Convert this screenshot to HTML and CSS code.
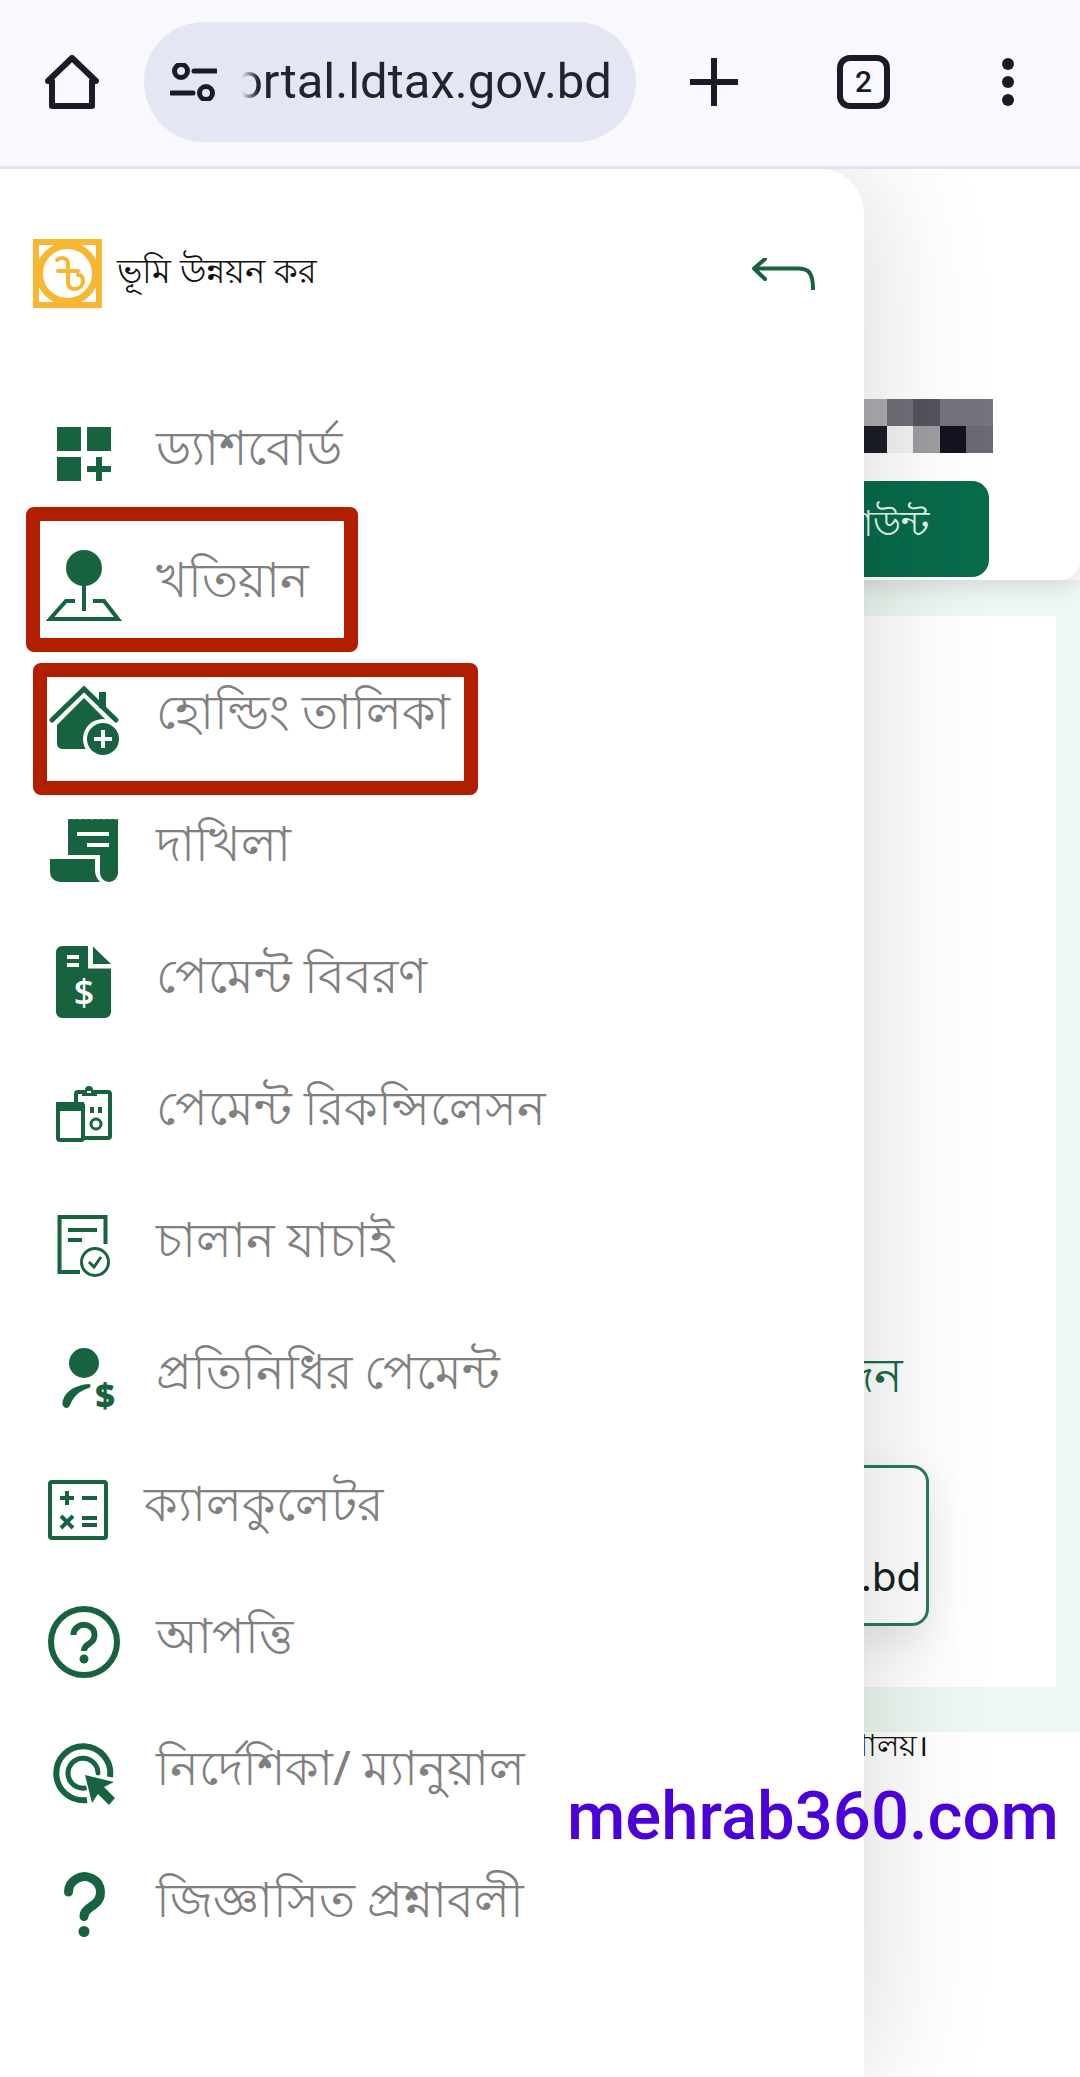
FILE: index.html
```html
<!DOCTYPE html>
<html lang="bn">
<head>
<meta charset="utf-8">
<title>ভূমি উন্নয়ন কর</title>
<link rel="stylesheet" href="styles.css">
</head>
<body>
<header class="toolbar">
  <svg class="tb-home" width="54" height="54" viewBox="0 0 54 54"><path class="tb-stroke" d="M7 51V26H3L27 3l24 23h-4v25Z"/></svg>
  <div class="pill">
    <svg class="pill-icon" width="47" height="38" viewBox="0 0 47 38"><circle class="tb-thin" cx="11" cy="8" r="6.5"/><path class="tb-thin" d="M24 8H46M1 30H23"/><circle class="tb-thin" cx="36" cy="30" r="6.5"/></svg>
    <div class="url"><span>portal.ldtax.gov.bd</span></div>
  </div>
  <svg class="tb-plus" width="48" height="48" viewBox="0 0 48 48"><path class="tb-stroke" d="M24 1V47M1 24H47"/></svg>
  <div class="tabs">2</div>
  <svg class="tb-dots" width="14" height="48" viewBox="0 0 14 48"><circle cx="7" cy="6" r="6"/><circle cx="7" cy="24" r="6"/><circle cx="7" cy="42" r="6"/></svg>
</header>

<main class="page">
  <section class="card">
    <div class="pixels">
      <i class="p1"></i><i class="p2"></i><i class="p3"></i><i class="p4"></i><i class="p4"></i>
      <i class="p5"></i><i class="p6"></i><i class="p7"></i><i class="p8"></i><i class="p9"></i>
    </div>
    <div class="account">অ্যাকাউন্ট</div>
  </section>
  <section class="band">
    <div class="panel">
      <h2 class="panel-title">আবেদন</h2>
      <div class="site-box">www.ldtax.gov.bd</div>
    </div>
  </section>
  <footer class="foot">ভূমি মন্ত্রণালয়।</footer>

  <aside class="drawer">
    <div class="brand">
      <svg class="logo" width="69" height="69" viewBox="0 0 69 69">
        <rect class="logo-frame" x="3" y="3" width="63" height="63"/>
        <circle class="logo-ring" cx="34.5" cy="34.5" r="28"/>
        <path class="logo-mark" d="M24 21c3-3 10-3 11 3V43c0 5 3 7 7 7s8-3 8-8-3-6-5-6M25 32H45"/>
      </svg>
      <span class="brand-name">ভূমি উন্নয়ন কর</span>
      <svg class="back" width="64" height="32" viewBox="0 0 64 32"><path d="M13 1L2 10.5 13 21M2 10.5H46C56 10.5 61 14 61 31"/></svg>
    </div>
    <nav class="menu">
      <a class="item"><svg class="ico" viewBox="0 0 80 80"><path d="M13 13H37V37H13ZM43 13H67V37H43ZM13 43H37V67H13ZM52 43H58V52H67V58H58V67H52V58H43V52H52Z"/></svg><span>ড্যাশবোর্ড</span></a>

      <a class="item"><svg class="ico" viewBox="0 0 80 80"><circle cx="40" cy="22" r="18"/><path class="st" d="M40 36V65M31 55H22L6 73H74L60 55H49"/></svg><span>খতিয়ান</span></a>

      <a class="item"><svg class="ico" viewBox="0 0 80 80"><path d="M55 14H62V30H55ZM40 20L67 47V71H18a5 5 0 0 1-5-5V47Z"/><path class="st5" d="M8 42L40 11 72 42"/><circle class="wh" cx="59" cy="61" r="20"/><circle cx="59" cy="61" r="16"/><path class="wh" d="M57 52H61V59H68V63H61V70H57V63H50V59H57Z"/></svg><span>হোল্ডিং তালিকা</span></a>

      <a class="item"><svg class="ico" viewBox="0 0 80 80"><path d="M24 9H74V63a9 9 0 0 1-18 0V45H24Z"/><path d="M6 49H51V60c0 5 2 9 5 12H16A10 10 0 0 1 6 62Z"/><path class="scallop" d="M24 8H74"/><path class="wh" d="M33 22H65V26H33ZM43 33H65V37H43Z"/></svg><span>দাখিলা</span></a>

      <a class="item"><svg class="ico" viewBox="0 0 80 80"><path d="M18 4H44V26.500H67V70a6 6 0 0 1-6 6H18a6 6 0 0 1-6-6V10A6 6 0 0 1 18 4Z"/><path d="M49 4.500L67 22H49Z"/><path class="wh" d="M23 13H35V17H23ZM23 21H35V25H23Z"/><text class="dollar-w" x="40" y="63">$</text></svg><span>পেমেন্ট বিবরণ</span></a>

      <a class="item"><svg class="ico" viewBox="0 0 80 80"><rect class="st" x="32" y="18" width="34" height="46" rx="2"/><path d="M38 22V16H41a4 4 0 0 1 8 0H53V22Z"/><path class="wh" d="M43 17H47V19H43Z"/><rect class="st-wh" x="14" y="30" width="25" height="36" rx="2"/><path d="M12 28H40V37H12Z"/><path d="M46 33H50V39H46ZM54 33H58V39H54Z"/><circle class="st3" cx="52" cy="50" r="5"/></svg><span>পেমেন্ট রিকন্সিলেসন</span></a>

      <a class="item"><svg class="ico" viewBox="0 0 80 80"><path class="st" d="M36 66H15.500V11H61.500V38"/><path class="st" d="M24 24H53M24 34H38"/><circle class="st-wh3" cx="51" cy="56" r="13.500"/><path class="st3" d="M45 56L50 61 57 51"/></svg><span>চালান যাচাই</span></a>

      <a class="item"><svg class="ico" viewBox="0 0 80 80"><circle cx="40" cy="25" r="15"/><path d="M20 69C18 67 18 65 19 62 22 53 31 47 45 46 47 46 47 49 45 50 35 53 30 58 26 67 25 70 22 71 20 69Z"/><text class="dollar-g" x="61" y="70">$</text></svg><span>প্রতিনিধির পেমেন্ট</span></a>

      <a class="item item-tight"><svg class="ico" viewBox="0 0 80 80"><rect class="st" x="6" y="12" width="56" height="56" rx="2"/><path class="st" d="M16 28H30M23 21V35M38 28H53M17 46L29 58M29 46L17 58M38 48H53M38 55H53"/></svg><span>ক্যালকুলেটর</span></a>

      <a class="item"><svg class="ico" viewBox="0 0 80 80"><circle class="st6" cx="40" cy="40" r="33"/><path class="st6" d="M29.500 33a10.500 10 0 1 1 16.500 8c-3.500 2.500-6 3.500-6 8"/><circle cx="40" cy="57" r="4.500"/></svg><span>আপত্তি</span></a>

      <a class="item"><svg class="ico" viewBox="0 0 80 80"><path class="st6" d="M66 43A27 27 0 1 0 43 66"/><path class="st5" d="M54 39A15 15 0 1 0 41 54"/><path class="arrow" d="M41 41L70 48 60 53 71 64 65 71 54 60 48 69Z"/></svg><span>নির্দেশিকা/ ম্যানুয়াল</span></a>

      <a class="item"><svg class="ico" viewBox="0 0 80 80"><path class="st9" d="M24.500 26a16 15.500 0 1 1 25 13c-5 3.500-9.500 6-9.500 11.500"/><circle cx="40" cy="65.500" r="5.500"/></svg><span>জিজ্ঞাসিত প্রশ্নাবলী</span></a>
    </nav>
  </aside>
</main>

<div class="mark mark-a"></div>
<div class="mark mark-b"></div>
<div class="watermark">mehrab360.com</div>
</body>
</html>
```

FILE: styles.css
```css
* { box-sizing: border-box; }
html, body { margin: 0; padding: 0; }
body {
  position: relative;
  width: 1080px;
  height: 2077px;
  overflow: hidden;
  background: #fff;
  font-family: "Noto Sans", "Open Sans", sans-serif;
}

/* browser toolbar */
.toolbar {
  position: relative;
  z-index: 3;
  display: flex;
  align-items: center;
  height: 169px;
  padding-bottom: 3px;
  background: #f8f8fe;
  border-bottom: 3px solid #e2e3ec;
}
.tb-home { margin-left: 45px; flex: none; }
.tb-stroke { fill: none; stroke: #1a1b26; stroke-width: 6; stroke-linejoin: round; stroke-linecap: round; }
.tb-thin { fill: none; stroke: #1a1b26; stroke-width: 5; stroke-linecap: round; }
.pill {
  display: flex;
  align-items: center;
  flex: none;
  width: 492px;
  height: 120px;
  margin-left: 45px;
  padding-left: 26px;
  border-radius: 60px;
  background: #e4e6f3;
}
.pill-icon { flex: none; }
.url {
  display: flex;
  justify-content: flex-end;
  width: 370px;
  margin-left: 25px;
  overflow: hidden;
  white-space: nowrap;
  font-family: Roboto, sans-serif;
  font-size: 49px;
  color: #1f2430;
  -webkit-mask-image: linear-gradient(to right, transparent 0, #000 16px);
  mask-image: linear-gradient(to right, transparent 0, #000 16px);
}
.tb-plus { margin-left: 54px; flex: none; }
.tabs {
  display: flex;
  align-items: center;
  justify-content: center;
  flex: none;
  width: 53px;
  height: 54px;
  margin-left: 99px;
  border: 6px solid #1a1b26;
  border-radius: 13px;
  font-family: Roboto, sans-serif;
  font-size: 30px;
  font-weight: 500;
  color: #1a1b26;
}
.tb-dots { margin-left: 111px; flex: none; fill: #1a1b26; }

/* page behind the drawer */
.page { position: relative; height: 1908px; background: #fff; }
.card {
  position: relative;
  z-index: 1;
  display: flex;
  flex-direction: column;
  align-items: flex-end;
  height: 411px;
  padding: 230px 87px 0 0;
  background: #fff;
  border-bottom-right-radius: 20px;
  box-shadow: 0 6px 24px rgba(0, 0, 0, .12);
}
.pixels {
  display: grid;
  grid-template-columns: repeat(5, 26.600px);
  grid-auto-rows: 27px;
  flex: none;
}
.p1 { background: #adadb2; }
.p2 { background: #6f6f78; }
.p3 { background: #52535c; }
.p4 { background: #73737c; }
.p5 { background: #1b1d28; }
.p6 { background: #f3f3f1; }
.p7 { background: #9d9da2; }
.p8 { background: #13141f; }
.p9 { background: #696a72; }
.account {
  display: flex;
  align-items: center;
  justify-content: flex-end;
  width: 300px;
  height: 96px;
  margin: 28px 4px 0 0;
  padding: 0 60px 6px 0;
  border-radius: 17px;
  background: #086b4c;
  color: #e6f7ef;
  font-size: 36px;
  font-weight: 500;
}
.band {
  height: 1152px;
  padding: 36px 24px 45px 0;
  background: #eef7f1;
}
.panel {
  display: flex;
  flex-direction: column;
  align-items: flex-end;
  height: 100%;
  padding-right: 127px;
  background: #fff;
}
.panel-title {
  margin: 726px 26px 0 0;
  font-size: 48px;
  font-weight: 400;
  line-height: 64px;
  color: #1a6b45;
  white-space: nowrap;
}
.site-box {
  display: flex;
  align-items: flex-end;
  justify-content: flex-end;
  width: 500px;
  height: 161px;
  margin-top: 59px;
  padding: 0 5px 22px 0;
  border: 3px solid #2a7a55;
  border-radius: 17px;
  box-shadow: 0 14px 40px rgba(0, 0, 0, .1);
  font-family: Inter, sans-serif;
  font-size: 40px;
  color: #14241e;
}
.foot {
  padding-right: 152px;
  text-align: right;
  font-size: 30px;
  line-height: 26px;
  color: #111;
}

/* drawer */
.drawer {
  position: absolute;
  top: 0;
  left: 0;
  z-index: 2;
  width: 864px;
  height: 100%;
  background: #fff;
  border-top-right-radius: 44px;
  box-shadow: 0 0 130px rgba(0, 0, 0, .16);
}
.brand {
  display: flex;
  align-items: center;
  height: 219px;
  padding: 0 48px 10px 33px;
}
.logo { flex: none; }
.logo-frame { fill: #fff; stroke: #f7b733; stroke-width: 6; }
.logo-ring { fill: #fff; stroke: #f7b733; stroke-width: 7; }
.logo-mark { fill: none; stroke: #f7b733; stroke-width: 4; stroke-linecap: round; }
.brand-name {
  flex: 1;
  margin-left: 15px;
  font-size: 34px;
  color: #111;
}
.back { flex: none; }
.back path { fill: none; stroke: #17633f; stroke-width: 4; stroke-linecap: round; stroke-linejoin: round; }
.menu { display: flex; flex-direction: column; }
.item {
  display: flex;
  align-items: center;
  gap: 32px;
  height: 132px;
  padding-left: 44px;
  font-size: 48px;
  line-height: 64px;
  color: #808080;
}
.item span { white-space: nowrap; margin-bottom: 14px; }
.item-tight { gap: 20px; }
.ico { flex: none; width: 80px; height: 80px; fill: #17633f; }
.ico .st, .ico .st3, .ico .st5, .ico .st6, .ico .st9 { fill: none; stroke: #17633f; }
.ico .st { stroke-width: 4; }
.ico .st3 { stroke-width: 3; }
.ico .st5 { stroke-width: 5; stroke-linecap: round; }
.ico .st6 { stroke-width: 6; }
.ico .st9 { stroke-width: 9; stroke-linecap: round; }
.ico .st-wh { fill: #fff; stroke: #17633f; stroke-width: 4; }
.ico .st-wh3 { fill: #fff; stroke: #17633f; stroke-width: 3; }
.ico .wh { fill: #fff; }
.ico .scallop { fill: none; stroke: #fff; stroke-width: 3; stroke-linecap: round; stroke-dasharray: 0 6; }
.ico .arrow { stroke: #fff; stroke-width: 3; paint-order: stroke; }
.dollar-w, .dollar-g { font-family: "Open Sans", sans-serif; text-anchor: middle; }
.dollar-w { font-size: 36px; font-weight: 600; fill: #fff; }
.dollar-g { font-size: 34px; font-weight: 800; fill: #17633f; }

/* annotations laid over the screenshot */
.mark {
  position: absolute;
  z-index: 4;
  border: 14px solid #b21e00;
  border-radius: 8px;
}
.mark-a { left: 26px; top: 507px; width: 332px; height: 145px; }
.mark-b { left: 33px; top: 663px; width: 445px; height: 132px; }
.watermark {
  position: absolute;
  z-index: 4;
  left: 567px;
  top: 1776px;
  font-family: Roboto, sans-serif;
  font-size: 67px;
  font-weight: 500;
  line-height: 80px;
  color: #4b00d9;
  white-space: nowrap;
}
```
